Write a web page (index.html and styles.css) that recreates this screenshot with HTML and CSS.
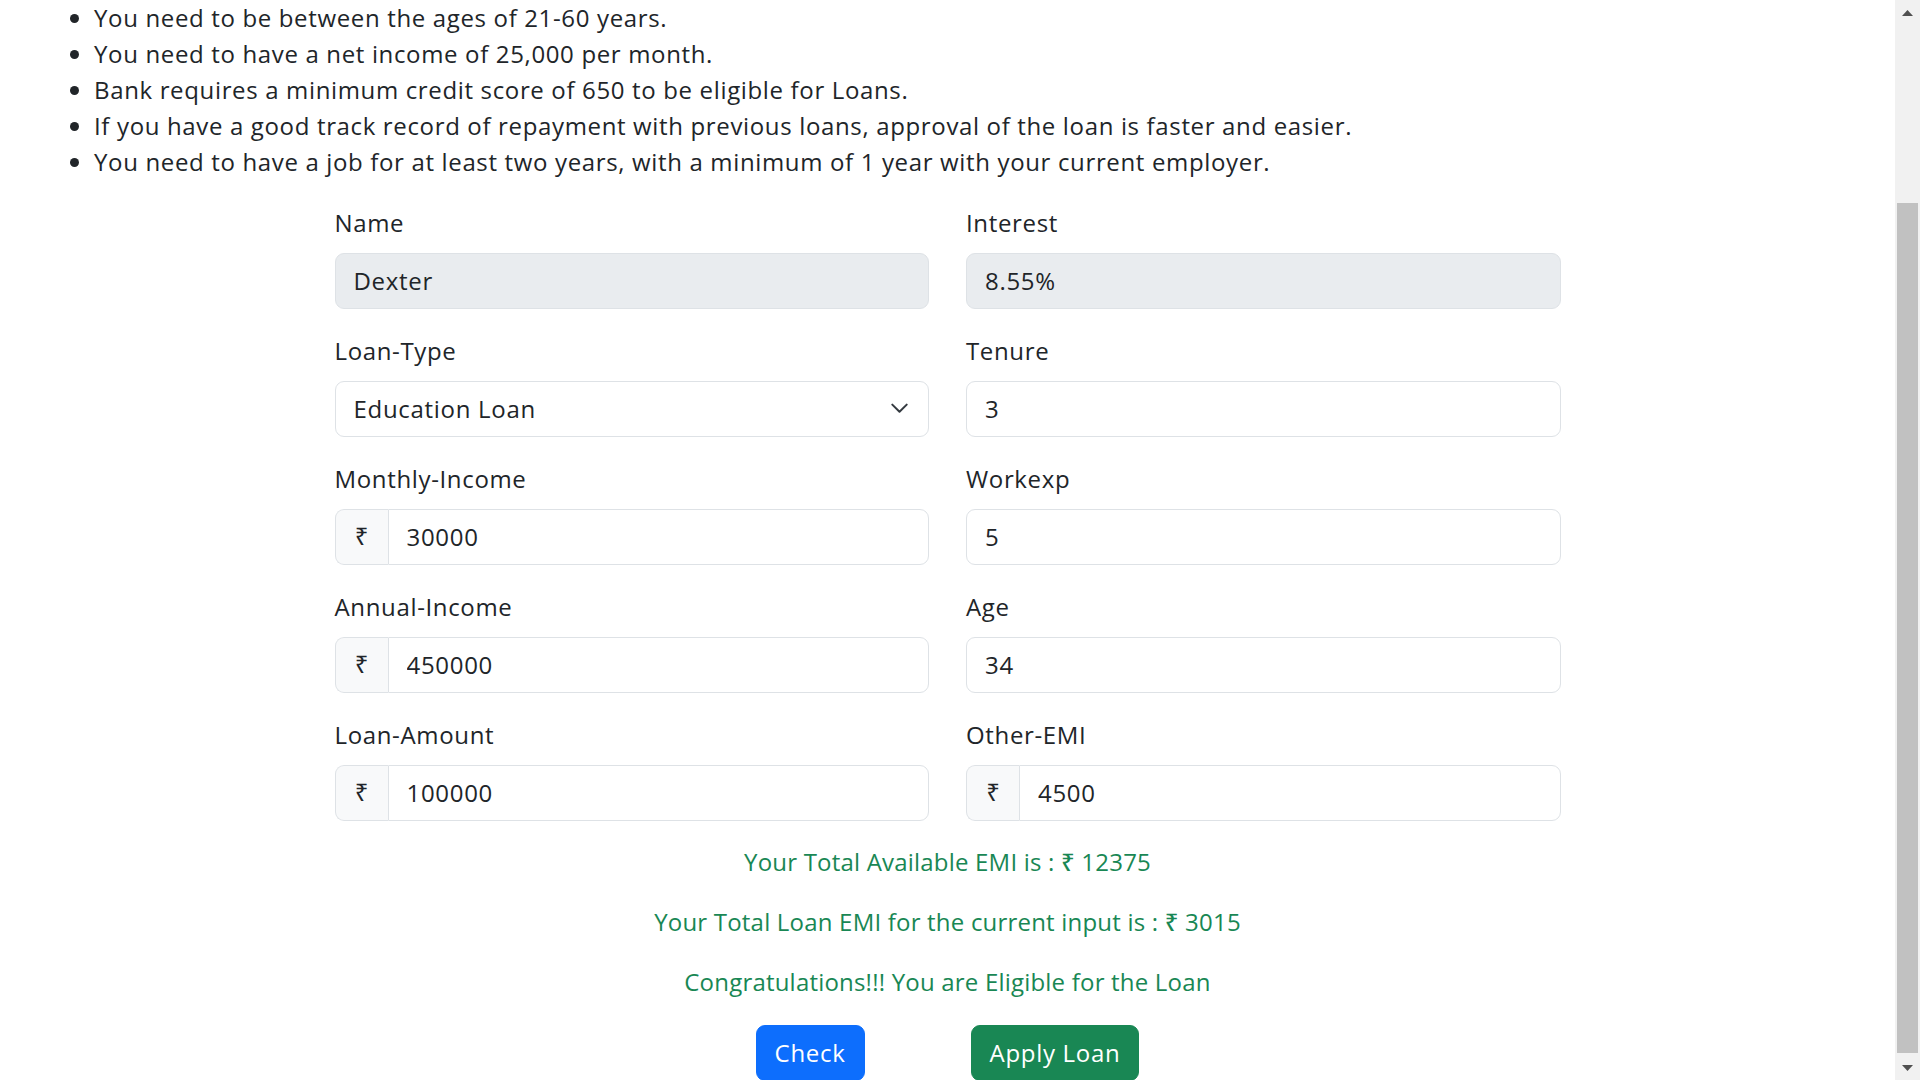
FILE: index.html
```html
<!DOCTYPE html>
<html lang="en">
<head>
<meta charset="utf-8">
<title>Loan Eligibility</title>
<link rel="stylesheet" href="styles.css">
</head>
<body>
<div class="page">
  <main class="content">
    <ul class="criteria">
      <li>You need to be between the ages of 21-60 years.</li>
      <li>You need to have a net income of 25,000 per month.</li>
      <li>Bank requires a minimum credit score of 650 to be eligible for Loans.</li>
      <li>If you have a good track record of repayment with previous loans, approval of the loan is faster and easier.</li>
      <li>You need to have a job for at least two years, with a minimum of 1 year with your current employer.</li>
    </ul>

    <form class="loan-form">
      <div class="grid">
        <div class="field">
          <label class="label">Name</label>
          <input class="control is-disabled" value="Dexter" readonly>
        </div>
        <div class="field">
          <label class="label">Interest</label>
          <input class="control is-disabled" value="8.55%" readonly>
        </div>

        <div class="field">
          <label class="label">Loan-Type</label>
          <div class="select-wrap">
            <select class="control select">
              <option>Education Loan</option>
            </select>
            <svg class="chevron" viewBox="0 0 17 11" width="17" height="11"><path d="M1.3 1.6L8.5 8.8L15.7 1.6" fill="none" stroke="#343a40" stroke-width="2" stroke-linecap="round" stroke-linejoin="round"/></svg>
          </div>
        </div>
        <div class="field">
          <label class="label">Tenure</label>
          <input class="control" value="3">
        </div>

        <div class="field">
          <label class="label">Monthly-Income</label>
          <div class="input-group">
            <span class="addon">₹</span>
            <input class="control grouped" value="30000">
          </div>
        </div>
        <div class="field">
          <label class="label">Workexp</label>
          <input class="control" value="5">
        </div>

        <div class="field">
          <label class="label">Annual-Income</label>
          <div class="input-group">
            <span class="addon">₹</span>
            <input class="control grouped" value="450000">
          </div>
        </div>
        <div class="field">
          <label class="label">Age</label>
          <input class="control" value="34">
        </div>

        <div class="field">
          <label class="label">Loan-Amount</label>
          <div class="input-group">
            <span class="addon">₹</span>
            <input class="control grouped" value="100000">
          </div>
        </div>
        <div class="field">
          <label class="label">Other-EMI</label>
          <div class="input-group">
            <span class="addon">₹</span>
            <input class="control grouped" value="4500">
          </div>
        </div>
      </div>

      <div class="results">
        <p class="result">Your Total Available EMI is : ₹ 12375</p>
        <p class="result">Your Total Loan EMI for the current input is : ₹ 3015</p>
        <p class="result">Congratulations!!! You are Eligible for the Loan</p>
      </div>

      <div class="actions">
        <button type="button" class="btn btn-primary">Check</button>
        <button type="button" class="btn btn-success">Apply Loan</button>
      </div>
    </form>
  </main>

  <aside class="scrollbar" aria-hidden="true">
    <div class="sb-arrow sb-up">
      <svg width="11" height="6" viewBox="0 0 11 6"><path d="M5.5 0L11 6H0z" fill="#505050"/></svg>
    </div>
    <div class="sb-track-gap"></div>
    <div class="sb-thumb"></div>
    <div class="sb-arrow sb-down">
      <svg width="11" height="6" viewBox="0 0 11 6"><path d="M0 0h11L5.5 6z" fill="#505050"/></svg>
    </div>
  </aside>
</div>
</body>
</html>
```

FILE: styles.css
```css
* {
  box-sizing: border-box;
}

html, body {
  margin: 0;
  padding: 0;
  height: 1080px;
  overflow: hidden;
  background: #ffffff;
}

body {
  font-family: "Open Sans", "Noto Sans", "DejaVu Sans", sans-serif;
  font-size: 24px;
  line-height: 36px;
  letter-spacing: 0.65px;
  color: #212529;
}

.page {
  display: flex;
  width: 1920px;
  height: 1080px;
}

.content {
  flex: 1;
  height: 1080px;
  overflow: hidden;
}

/* criteria list */
.criteria {
  margin: 0 0 25px 0;
  padding: 0 0 0 94px;
}

.criteria li {
  line-height: 36px;
}

/* form */
.loan-form {
  width: 1226px;
  margin: 0 auto;
}

.grid {
  display: grid;
  grid-template-columns: 1fr 1fr;
  column-gap: 37px;
  row-gap: 24px;
  margin-bottom: 23px;
}

.field {
  display: flex;
  flex-direction: column;
}

.label {
  display: block;
  line-height: 36px;
  margin-bottom: 12px;
}

.control {
  display: block;
  width: 100%;
  height: 56px;
  padding: 0 18px 2px 18px;
  font-family: inherit;
  font-size: 24px;
  letter-spacing: 0.7px;
  color: #212529;
  background: #ffffff;
  border: 1px solid #dee2e6;
  border-radius: 9px;
  outline: none;
}

.control.is-disabled {
  background: #e9ecef;
}

.select-wrap {
  position: relative;
}

.select {
  appearance: none;
  -webkit-appearance: none;
  padding-right: 54px;
}

.chevron {
  position: absolute;
  right: 21px;
  top: 22px;
  pointer-events: none;
}

.input-group {
  display: flex;
  height: 56px;
}

.addon {
  display: flex;
  align-items: center;
  justify-content: center;
  width: 53px;
  flex: none;
  background: #f8f9fa;
  border: 1px solid #dee2e6;
  border-right: none;
  border-radius: 9px 0 0 9px;
  font-size: 24px;
  letter-spacing: 0;
  padding-bottom: 2px;
  color: #212529;
}

.control.grouped {
  flex: 1;
  border-radius: 0 9px 9px 0;
}

/* results */
.results {
  text-align: center;
}

.result {
  margin: 0 0 24px 0;
  line-height: 36px;
  font-weight: 500;
  letter-spacing: 0.2px;
  color: #198754;
}

.actions {
  display: flex;
  justify-content: center;
  gap: 106px;
  padding-top: 1px;
}

.btn {
  font-family: inherit;
  font-size: 24px;
  line-height: 36px;
  letter-spacing: 0.7px;
  padding: 9px 18px;
  border: 1px solid transparent;
  border-radius: 9px;
  color: #ffffff;
  cursor: pointer;
}

.btn-primary {
  background: #0d6efd;
  border-color: #0d6efd;
}

.btn-success {
  background: #198754;
  border-color: #198754;
}

/* scrollbar */
.scrollbar {
  width: 25px;
  flex: none;
  height: 1080px;
  background: #f1f1f1;
  display: flex;
  flex-direction: column;
  align-items: center;
}

.sb-arrow {
  width: 25px;
  display: flex;
  justify-content: center;
}

.sb-up {
  height: 20px;
  padding-top: 10px;
}

.sb-track-gap {
  height: 183px;
}

.sb-thumb {
  width: 21px;
  height: 850px;
  background: #c1c1c1;
}

.sb-down {
  flex: 1;
  padding-top: 12px;
}
```
